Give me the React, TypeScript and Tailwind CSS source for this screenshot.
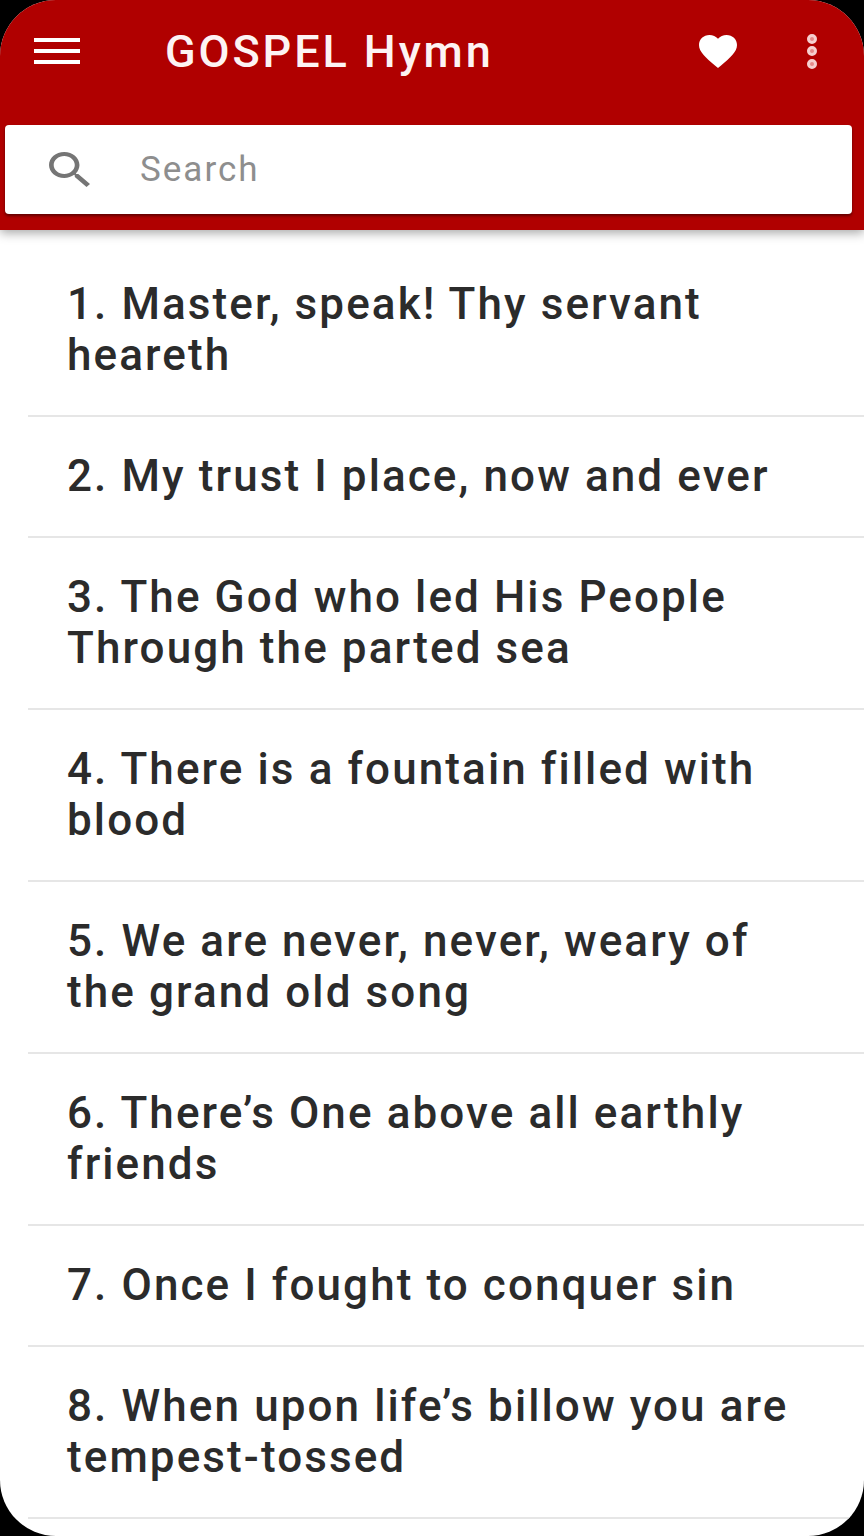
const hymns = [
  "1. Master, speak! Thy servant heareth",
  "2. My trust I place, now and ever",
  "3. The God who led His People Through the parted sea",
  "4. There is a fountain filled with blood",
  "5. We are never, never, weary of the grand old song",
  "6. There’s One above all earthly friends",
  "7. Once I fought to conquer sin",
  "8. When upon life’s billow you are tempest-tossed",
]

const App = () => {
  return (
    <div className="h-[1536px] w-[864px] bg-black font-['Roboto',sans-serif]">
      <div className="flex h-full flex-col overflow-hidden rounded-[56px] bg-white">
        <header className="relative z-10 h-[230px] shrink-0 bg-[#b00000] shadow-[0_3px_10px_rgba(0,0,0,0.35)]">
          <div className="flex h-[102px] items-center pl-[34px] pr-[47px]">
            <div className="flex w-[46px] flex-col gap-[7px]">
              <span className="h-[4px] bg-white" />
              <span className="h-[4px] bg-white" />
              <span className="h-[4px] bg-white" />
            </div>
            <h1 className="ml-[85px] flex-1 text-[45px] font-medium leading-none tracking-[2.9px] text-[#fdf3f3]">
              GOSPEL Hymn
            </h1>
            <svg className="mr-[70px] h-[33px] w-[38px] fill-white" viewBox="2 3 20 18.35" preserveAspectRatio="none">
              <path d="M12 21.35l-1.45-1.32C5.4 15.36 2 12.28 2 8.5 2 5.42 4.42 3 7.5 3c1.74 0 3.41.81 4.5 2.09C13.09 3.81 14.76 3 16.5 3 19.58 3 22 5.42 22 8.5c0 3.78-3.4 6.86-8.55 11.54L12 21.35z" />
            </svg>
            <div className="flex flex-col gap-[2.5px]">
              <span className="h-[10px] w-[10px] rounded-full border-[3px] border-[#f6cfcf] bg-[#e58a8a]" />
              <span className="h-[10px] w-[10px] rounded-full border-[3px] border-[#f6cfcf] bg-[#e58a8a]" />
              <span className="h-[10px] w-[10px] rounded-full border-[3px] border-[#f6cfcf] bg-[#e58a8a]" />
            </div>
          </div>
          <div className="ml-[5px] mr-[12px] mt-[23px] flex h-[89px] items-center rounded-[4px] bg-white pl-[44px] shadow-[0_2px_3px_rgba(0,0,0,0.45)]">
            <svg className="h-[35px] w-[41px] fill-[#757575]" viewBox="3 3 17.49 17.49" preserveAspectRatio="none">
              <path d="M15.5 14h-.79l-.28-.27C15.41 12.59 16 11.11 16 9.5 16 5.91 13.09 3 9.5 3S3 5.91 3 9.5 5.91 16 9.5 16c1.61 0 3.09-.59 4.23-1.57l.27.28v.79l5 4.99L20.49 19l-4.99-5zm-6 0C7.01 14 5 11.99 5 9.5S7.01 5 9.5 5 14 7.01 14 9.5 11.99 14 9.5 14z" />
            </svg>
            <span className="ml-[50px] text-[35px] leading-none tracking-[2px] text-[#8e8e8e]">Search</span>
          </div>
        </header>
        <ul className="pl-[28px] pt-[15px]">
          {hymns.map((hymn) => (
            <li
              key={hymn}
              className="border-b-2 border-[#e6e6e6] py-[34px] pl-[39px] pr-[61px] text-[44px] font-medium leading-[51px] tracking-[2.1px] text-[#2b2b2b]"
            >
              {hymn}
            </li>
          ))}
        </ul>
      </div>
    </div>
  )
}

export default App
